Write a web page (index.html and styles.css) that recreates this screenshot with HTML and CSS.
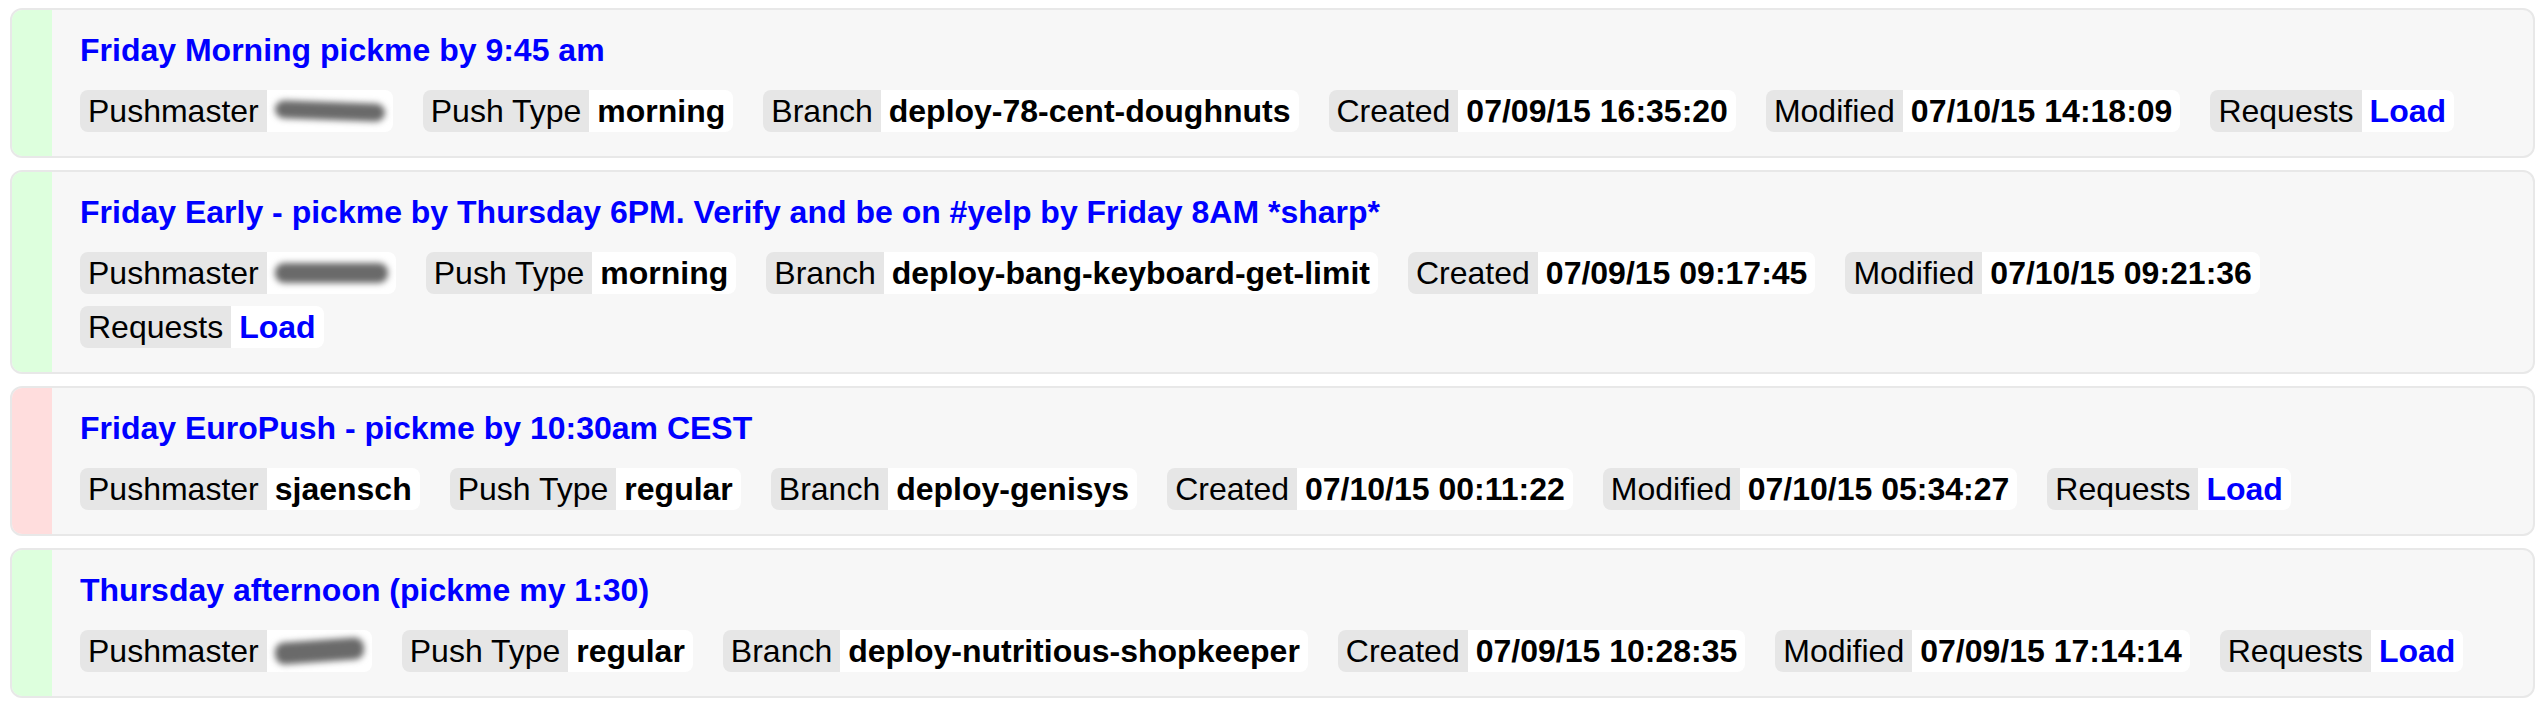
FILE: index.html
```html
<!DOCTYPE html>
<html>
<head>
<meta charset="utf-8">
<link rel="stylesheet" href="styles.css">
</head>
<body>
<div class="pushes">
  <div class="push">
    <div class="stripe stripe-ok"></div>
    <div class="push-body">
      <a class="push-title" href="#">Friday Morning pickme by 9:45 am</a>
      <div class="fields">
        <span class="field"><span class="label">Pushmaster</span><span class="value"><span class="redacted redacted-a"></span></span></span>
        <span class="field"><span class="label">Push Type</span><span class="value">morning</span></span>
        <span class="field"><span class="label">Branch</span><span class="value">deploy-78-cent-doughnuts</span></span>
        <span class="field"><span class="label">Created</span><span class="value">07/09/15 16:35:20</span></span>
        <span class="field"><span class="label">Modified</span><span class="value">07/10/15 14:18:09</span></span>
        <span class="field"><span class="label">Requests</span><span class="value"><a class="load" href="#">Load</a></span></span>
      </div>
    </div>
  </div>
  <div class="push">
    <div class="stripe stripe-ok"></div>
    <div class="push-body">
      <a class="push-title" href="#">Friday Early - pickme by Thursday 6PM. Verify and be on #yelp by Friday 8AM *sharp*</a>
      <div class="fields">
        <span class="field"><span class="label">Pushmaster</span><span class="value"><span class="redacted redacted-b"></span></span></span>
        <span class="field"><span class="label">Push Type</span><span class="value">morning</span></span>
        <span class="field"><span class="label">Branch</span><span class="value">deploy-bang-keyboard-get-limit</span></span>
        <span class="field"><span class="label">Created</span><span class="value">07/09/15 09:17:45</span></span>
        <span class="field"><span class="label">Modified</span><span class="value">07/10/15 09:21:36</span></span>
        <span class="field"><span class="label">Requests</span><span class="value"><a class="load" href="#">Load</a></span></span>
      </div>
    </div>
  </div>
  <div class="push">
    <div class="stripe stripe-bad"></div>
    <div class="push-body">
      <a class="push-title" href="#">Friday EuroPush - pickme by 10:30am CEST</a>
      <div class="fields">
        <span class="field"><span class="label">Pushmaster</span><span class="value">sjaensch</span></span>
        <span class="field"><span class="label">Push Type</span><span class="value">regular</span></span>
        <span class="field"><span class="label">Branch</span><span class="value">deploy-genisys</span></span>
        <span class="field"><span class="label">Created</span><span class="value">07/10/15 00:11:22</span></span>
        <span class="field"><span class="label">Modified</span><span class="value">07/10/15 05:34:27</span></span>
        <span class="field"><span class="label">Requests</span><span class="value"><a class="load" href="#">Load</a></span></span>
      </div>
    </div>
  </div>
  <div class="push">
    <div class="stripe stripe-ok"></div>
    <div class="push-body">
      <a class="push-title" href="#">Thursday afternoon (pickme my 1:30)</a>
      <div class="fields">
        <span class="field"><span class="label">Pushmaster</span><span class="value"><span class="redacted redacted-c"></span></span></span>
        <span class="field"><span class="label">Push Type</span><span class="value">regular</span></span>
        <span class="field"><span class="label">Branch</span><span class="value">deploy-nutritious-shopkeeper</span></span>
        <span class="field"><span class="label">Created</span><span class="value">07/09/15 10:28:35</span></span>
        <span class="field"><span class="label">Modified</span><span class="value">07/09/15 17:14:14</span></span>
        <span class="field"><span class="label">Requests</span><span class="value"><a class="load" href="#">Load</a></span></span>
      </div>
    </div>
  </div>
</div>
</body>
</html>
```

FILE: styles.css
```css
html, body {
  margin: 0;
  padding: 0;
  background: #ffffff;
}

body {
  font-family: "Liberation Sans", Arial, sans-serif;
  font-size: 32px;
  color: #000;
}

.pushes {
  display: flex;
  flex-direction: column;
  gap: 12px;
  padding: 8px 5px 0 10px;
}

.push {
  display: flex;
  background: #f7f7f7;
  border: 2px solid #e8e8e8;
  border-radius: 12px;
  overflow: hidden;
}

.stripe {
  width: 40px;
  flex: none;
}

.stripe-ok {
  background: #ddffdd;
}

.stripe-bad {
  background: #ffdddd;
}

.push-body {
  flex: 1;
  padding: 22px 28px 24px 28px;
}

.push-title {
  display: block;
  font-weight: bold;
  line-height: 36px;
  color: #0000ff;
  text-decoration: none;
  margin-bottom: 22px;
}

.fields {
  display: flex;
  flex-wrap: wrap;
  column-gap: 30px;
  row-gap: 12px;
}

.field {
  display: inline-flex;
  border-radius: 8px;
  overflow: hidden;
  line-height: 36px;
  white-space: nowrap;
}

.label {
  background: #e6e6e6;
  padding: 3px 8px;
}

.value {
  background: #ffffff;
  font-weight: bold;
  padding: 3px 8px;
  display: inline-flex;
  align-items: center;
}

.load {
  color: #0000ff;
  text-decoration: none;
}

.redacted {
  display: inline-block;
  height: 18px;
  background: #6a6a6a;
  border-radius: 9px;
  filter: blur(3px);
}

.redacted-a {
  width: 110px;
  transform: rotate(2deg);
}

.redacted-b {
  width: 113px;
  height: 20px;
}

.redacted-c {
  width: 89px;
  height: 22px;
  transform: rotate(-4deg);
}
```
